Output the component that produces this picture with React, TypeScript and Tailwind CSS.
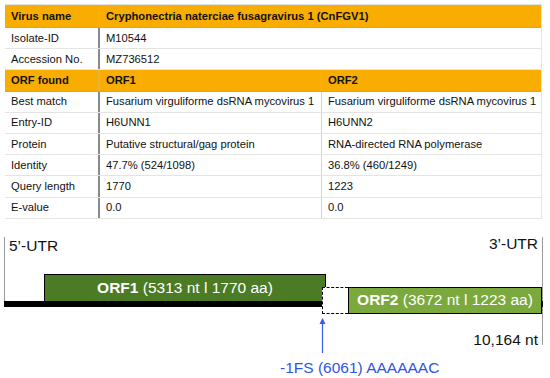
import React from 'react';

const rows: [string, string, string][] = [
  ['Best match', 'Fusarium virguliforme dsRNA mycovirus 1', 'Fusarium virguliforme dsRNA mycovirus 1'],
  ['Entry-ID', 'H6UNN1', 'H6UNN2'],
  ['Protein', 'Putative structural/gag protein', 'RNA-directed RNA polymerase'],
  ['Identity', '47.7% (524/1098)', '36.8% (460/1249)'],
  ['Query length', '1770', '1223'],
  ['E-value', '0.0', '0.0'],
];

function InfoTable() {
  const cell = 'flex items-center px-[6px] whitespace-nowrap overflow-hidden';
  return (
    <div className="ml-[5px] mt-[4px] w-[537px] text-[11.2px] text-[#111] border-t border-r border-[#e4e4e4]">
      {/* Header */}
      <div className="grid grid-cols-[95px_1fr] h-[23px] bg-[#f9ad00] font-bold border-b border-[#b9a67c]">
        <div className={`${cell} border-r border-[#e8b33a]`}>Virus name</div>
        <div className={cell}>Cryphonectria naterciae fusagravirus 1 (CnFGV1)</div>
      </div>
      <div className="grid grid-cols-[95px_1fr] h-[21.2px] border-b border-[#e4e4e4]">
        <div className={`${cell} border-r-2 border-[#8a8a8a]`}>Isolate-ID</div>
        <div className={cell}>M10544</div>
      </div>
      <div className="grid grid-cols-[95px_1fr] h-[21.2px] border-b border-[#e4e4e4]">
        <div className={`${cell} border-r-2 border-[#8a8a8a]`}>Accession No.</div>
        <div className={cell}>MZ736512</div>
      </div>
      <div className="grid grid-cols-[95px_222px_1fr] h-[21.2px] bg-[#f9ad00] font-bold border-b border-[#b9a67c]">
        <div className={`${cell} border-r-2 border-[#e8b33a]`}>ORF found</div>
        <div className={`${cell} border-r border-[#e8b33a]`}>ORF1</div>
        <div className={cell}>ORF2</div>
      </div>
      {rows.map(([a, b, c]) => (
        <div key={a} className="grid grid-cols-[95px_222px_1fr] h-[21.2px] border-b border-[#e4e4e4]">
          <div className={`${cell} border-r-2 border-[#8a8a8a]`}>{a}</div>
          <div className={`${cell} border-r border-[#d4d4d4]`}>{b}</div>
          <div className={cell}>{c}</div>
        </div>
      ))}
    </div>
  );
}

function GenomeMap() {
  return (
    <div className="relative h-[158px] text-[15.5px] leading-none">
      {/* UTR markers */}
      <div className="absolute left-[4px] top-[18px] w-px h-[64px] bg-[#9a9a9a]" />
      <div className="absolute left-[9px] top-[19px] text-[#111]">5’-UTR</div>
      <div className="absolute right-[7px] top-[18px] w-px h-[108px] bg-[#9a9a9a]" />
      <div className="absolute right-[12px] top-[17px] text-[#111]">3’-UTR</div>

      {/* genome line */}
      <div className="absolute left-[4px] top-[82px] w-[539px] h-[6px] bg-black" />

      {/* ORF1 */}
      <div className="absolute left-[44px] top-[55px] w-[282px] h-[27px] bg-[#4b7b25] border border-b-0 border-black flex items-center justify-center text-white">
        <span className="font-bold">ORF1</span>
        <span>&nbsp;(5313 nt l 1770 aa)</span>
      </div>

      {/* ORF2 with frameshift region */}
      <div className="absolute left-[322px] top-[68px] h-[27px] flex">
        <div className="w-[26px] h-full bg-white border border-r-0 border-dashed border-black" />
        <div className="w-[194px] h-full bg-[#7ba93e] border border-black flex items-center justify-center text-white">
          <span className="font-bold">ORF2</span>
          <span>&nbsp;(3672 nt l 1223 aa)</span>
        </div>
      </div>

      {/* frameshift arrow */}
      <svg className="absolute left-[318px] top-[98px]" width="9" height="36" viewBox="0 0 9 36">
        <line x1="4.5" y1="2" x2="4.5" y2="36" stroke="#3b5ddf" strokeWidth="1.2" />
        <path d="M1.5 7 L4.5 1 L7.5 7 Z" fill="#3b5ddf" />
      </svg>
      <div className="absolute left-[280px] top-[141px] text-[#2f55e4]">-1FS (6061) AAAAAAC</div>

      <div className="absolute right-[12px] top-[113px] text-[#111]">10,164 nt</div>
    </div>
  );
}

export default function App() {
  return (
    <div className="w-[550px] h-[378px] bg-white overflow-hidden" style={{ fontFamily: '"Liberation Sans", Arial, sans-serif' }}>
      <InfoTable />
      <GenomeMap />
    </div>
  );
}
